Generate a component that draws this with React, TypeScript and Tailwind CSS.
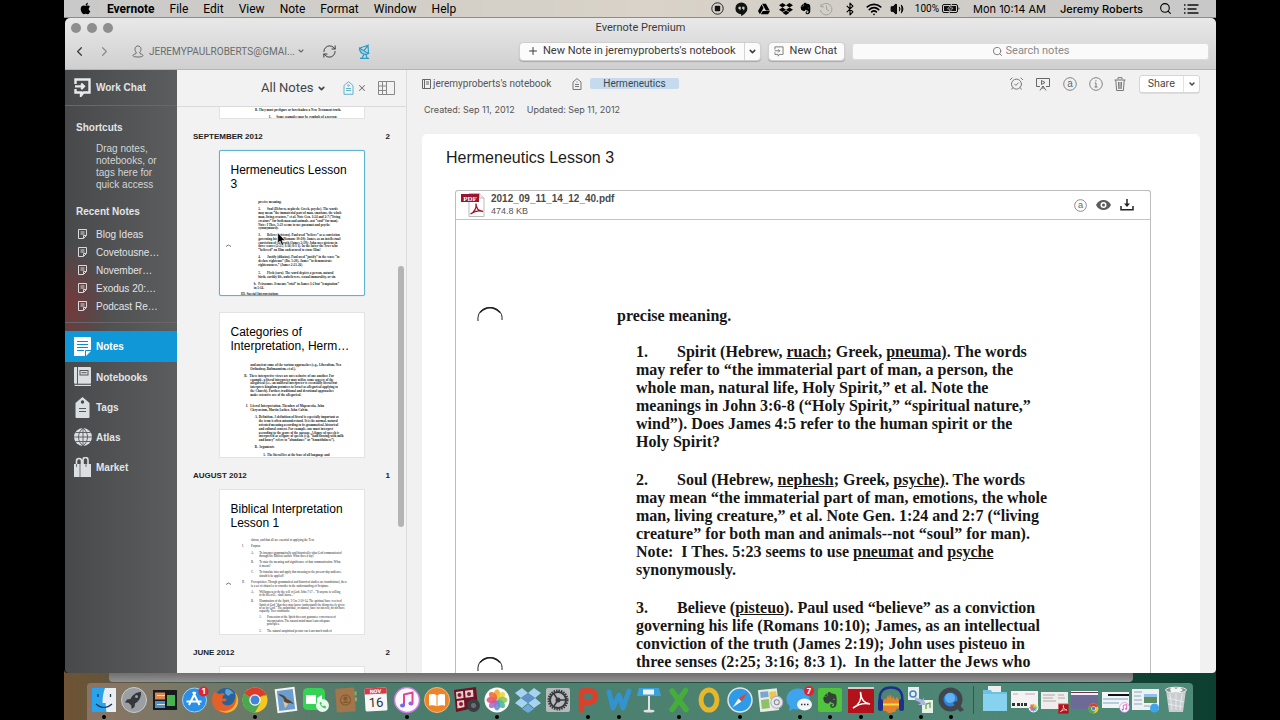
import React from "react";
import {
  AlarmClockCheck,
  Bluetooth,
  ChevronDown,
  ChevronLeft,
  ChevronRight,
  Plus,
  RefreshCw,
  Search,
  Volume2,
  Wifi,
  X,
} from "lucide-react";
import { FaApple, FaDropbox, FaEvernote, FaGoogleDrive } from "react-icons/fa";

/* ---------- menu bar ---------- */

const menus = ["File", "Edit", "View", "Note", "Format", "Window", "Help"];

function MenuBar() {
  return (
    <header className="flex h-[18px] shrink-0 items-center border-b border-[#8c8c8c] bg-linear-to-r from-[#c9c9c9] via-[#d9d3c8] to-[#c8c8c8] pl-[15px] pr-[17px] font-['Inter',sans-serif] text-[12px] leading-4 text-black">
      <FaApple className="h-[13px] w-[13px]" />
      <nav className="ml-[15px] flex gap-[15px] font-['Roboto',sans-serif]">
        <button className="font-bold">Evernote</button>
        {menus.map((m) => (
          <button key={m}>{m}</button>
        ))}
      </nav>
      <div className="ml-auto flex items-center">
        <svg className="h-[13px] w-[13px]" viewBox="0 0 13 13">
          <circle cx="6.5" cy="6.5" r="5.7" fill="none" stroke="#222" />
          <rect x="3.8" y="3.8" width="5.4" height="5.4" rx="1" fill="#111" />
        </svg>
        <svg className="ml-[11px] h-[14px] w-[13px]" viewBox="0 0 13 14">
          <path d="M6.5 .5a5.9 5.9 0 0 0-.4 11.8V14c3-1.400 6.300-4.200 6.300-7.600A5.900 5.900 0 0 0 6.500 .5z" fill="#111" />
          <path d="M3.500 4.700h2.300v2.500L4.600 8.500V7H3.500zM7.200 4.700h2.300v2.500L8.300 8.500V7H7.200z" fill="#ccc" />
        </svg>
        <FaGoogleDrive className="ml-[10px] h-[12px] w-[12px]" />
        <FaDropbox className="ml-[9px] h-[14px] w-[14px]" />
        <FaEvernote className="ml-[6px] h-[13px] w-[13px]" />
        <svg className="ml-[7px] h-[14px] w-[14px]" viewBox="0 0 14 14" fill="none" stroke="#a3a3a3">
          <path d="M2 4.500a5.800 5.800 0 1 1-.6 3.500M2 1.800v3h3M7.500 3.500v4l2.500 1.200" />
        </svg>
        <Bluetooth className="ml-[10px] h-[14px] w-[14px]" strokeWidth={2} />
        <Wifi className="ml-[9px] h-[16px] w-[16px]" strokeWidth={2.600} />
        <Volume2 className="ml-[8px] h-[14px] w-[14px]" fill="#111" strokeWidth={1.800} />
        <span className="ml-[11px] font-['Roboto',sans-serif] text-[10px]">100%</span>
        <svg className="ml-[3px] h-[9px] w-[18px]" viewBox="0 0 18 9">
          <rect x=".5" y=".5" width="15" height="8" rx="1.500" fill="none" stroke="#111" />
          <rect x="2" y="2" width="12" height="5" fill="#111" />
          <path d="M9.500 0 5.500 5h2.500L7 9l4-5H8.500z" fill="#111" stroke="#ccc" strokeWidth=".7" />
          <path d="M16.500 3v3l1-1.500z" fill="#111" />
        </svg>
        <span className="ml-[13px] text-[11px]">Mon 10:14 AM</span>
        <span className="ml-[14px] text-[11px] font-medium">Jeremy Roberts</span>
        <Search className="ml-[16px] h-[13px] w-[13px]" />
        <svg className="ml-[12px] h-[10px] w-[15px]" viewBox="0 0 15 10" stroke="#111" strokeWidth="1.500">
          <path d="M0 1h1.500M0 5h1.500M0 9h1.500M3.500 1h11M3.500 5h9M3.500 9h11" />
        </svg>
      </div>
    </header>
  );
}

/* ---------- window title and toolbar ---------- */

function ChatGlyph({ className, thin }: { className: string; thin?: boolean }) {
  return (
    <svg className={className} viewBox="0 0 17 19" fill="none" stroke="currentColor">
      <path d="M1.500 6V1.500h14v13H9.500L7 17.500v-3H1.500V11" strokeWidth={thin ? 1.600 : 2.400} />
      <path d="M1 8.300h8.500M7.200 5.500 10 8.300l-2.800 2.800" strokeWidth={thin ? 1.600 : 2.200} />
    </svg>
  );
}

const barButton =
  "flex h-[19px] shrink-0 items-center rounded-[4px] border border-[#cfcfcf] bg-[#fbfbfb] shadow-[0_1px_1px_rgba(0,0,0,0.2)]";

function TitleBar() {
  return (
    <div className="flex h-[52px] shrink-0 flex-col rounded-t-[5px] border-b border-[#b5b5b5] bg-linear-to-b from-[#e9e9e9] to-[#cfcfcf] font-['Roboto',sans-serif] text-[#3c3c3c]">
      <div className="grid h-[20px] grid-cols-[1fr_auto_1fr] items-center">
        <div className="flex gap-[6px] pl-[6px]">
          <span className="h-[10px] w-[10px] rounded-full bg-[#8e8e8e]" />
          <span className="h-[10px] w-[10px] rounded-full bg-[#8e8e8e]" />
          <span className="h-[10px] w-[10px] rounded-full bg-[#8e8e8e]" />
        </div>
        <h1 className="text-[11px] leading-4">Evernote Premium</h1>
      </div>
      <div className="flex h-[26px] items-center pr-[7px]">
        <div className="flex w-[454px] shrink-0 items-center pl-[7px]">
          <button aria-label="Back"><ChevronLeft className="h-[15px] w-[15px]" strokeWidth={2} /></button>
          <button aria-label="Forward" className="ml-[10px] text-[#8d8d8d]"><ChevronRight className="h-[15px] w-[15px]" strokeWidth={2} /></button>
          <button className="ml-[20px] flex w-[162px] items-center text-[10px] text-[#6b6b6b]">
            <svg className="h-[13px] w-[12px] shrink-0" viewBox="0 0 12 13" fill="none" stroke="currentColor">
              <path d="M4.500 8C1.800 4.500 3 1 6 1s4.200 3.500 1.500 7c0 1 3.500 1 3.500 2.500 0 1.200-2.500 1.500-5 1.500s-5-.3-5-1.500C1 9 4.500 9 4.500 8z" />
            </svg>
            <span className="ml-[5px]">JEREMYPAULROBERTS@GMAI...</span>
            <ChevronDown className="ml-[2px] h-[8px] w-[8px] shrink-0" strokeWidth={3.500} />
          </button>
          <button aria-label="Sync" className="ml-[28px]"><RefreshCw className="h-[15px] w-[15px]" strokeWidth={1.600} /></button>
          <button aria-label="Announcements" className="ml-[20px]">
            <svg className="h-[15px] w-[14px]" viewBox="0 0 14 15" fill="none" stroke="#2b9bc7" strokeWidth="1.200">
              <path d="M2.500 4C2.500 9 7 12 11.500 9.500z" fill="#9fd2e6" />
              <path d="M7 6.700 11 1.300 11.500 9.500M3 4l8-2.700M7 10.500 5 14M9 10.700l1 3.300M3 14.300h9" />
            </svg>
          </button>
        </div>
        <div className={barButton}>
          <button className="flex h-full items-center pl-[7px] pr-[8px] text-[11px]">
            <Plus className="h-[12px] w-[12px]" strokeWidth={2} />
            <span className="ml-[4px]">New Note in jeremyproberts's notebook</span>
          </button>
          <button aria-label="New note options" className="flex h-full w-[16px] items-center justify-center border-l border-[#d4d4d4]">
            <ChevronDown className="h-[9px] w-[9px]" strokeWidth={4} />
          </button>
        </div>
        <button className={`${barButton} ml-[7px] pl-[5px] pr-[7px] text-[11px]`}>
          <ChatGlyph className="h-[11px] w-[10px] text-[#777]" thin />
          <span className="ml-[6px]">New Chat</span>
        </button>
        <label className="ml-[7px] flex h-[17px] min-w-0 flex-1 items-center justify-center rounded-[3px] border border-[#dcdcdc] bg-[#fafafa]">
          <Search className="h-[11px] w-[11px] text-[#777]" />
          <input
            aria-label="Search notes"
            placeholder="Search notes"
            className="ml-[3px] w-[64px] bg-transparent text-[11px] leading-4 outline-none placeholder:text-[#8a8a8a]"
          />
        </label>
      </div>
    </div>
  );
}

/* ---------- sidebar ---------- */

const recent = ["Blog Ideas", "Covetousne…", "November…", "Exodus 20:…", "Podcast Re…"];

function NotesIcon() {
  return (
    <svg className="h-[20px] w-[17px]" viewBox="0 0 17 20">
      <path d="M0 0h17v14l-5 5H0z" fill="#fff" />
      <path d="M3 4.500h11M3 7.500h11M3 10.500h11M3 13.500h7" stroke="#1089cf" />
      <path d="M11.500 19v-5.500H17" fill="none" stroke="#1089cf" />
    </svg>
  );
}
function NotebooksIcon() {
  return (
    <svg className="h-[20px] w-[17px]" viewBox="0 0 17 20">
      <rect x="0" y="0" width="17" height="17" rx="1" fill="#dcdfe2" />
      <path d="M0 17.500h17v1.500H1z" fill="#dcdfe2" />
      <path d="M3.500 0v17M0 17.200h17" stroke="#55585b" />
      <rect x="6" y="3.500" width="8" height="4.500" fill="none" stroke="#55585b" />
      <path d="M7.500 5.700h5" stroke="#55585b" />
    </svg>
  );
}
function TagsIcon() {
  return (
    <svg className="h-[21px] w-[17px]" viewBox="0 0 17 21">
      <path d="M8.500 0 15.500 6v14a1 1 0 0 1-1 1h-12a1 1 0 0 1-1-1V6z" fill="#dcdfe2" />
      <circle cx="8.500" cy="5" r="1.700" fill="#46494c" />
      <path d="M5 11.500h7M5 14.500h7" stroke="#55585b" />
    </svg>
  );
}
function AtlasIcon() {
  return (
    <svg className="h-[18px] w-[18px] shrink-0" viewBox="0 0 18 18">
      <circle cx="9" cy="9" r="9" fill="#dcdfe2" />
      <path d="M9 0v18M0 9h18M1.500 4.500h15M1.500 13.500h15M9 0C3 5 3 13 9 18M9 0c6 5 6 13 0 18" fill="none" stroke="#55585b" strokeWidth=".9" />
    </svg>
  );
}
function MarketIcon() {
  return (
    <svg className="h-[20px] w-[17px]" viewBox="0 0 17 20">
      <path d="M0 7h17v13H0z" fill="#dcdfe2" />
      <path d="M2.500 9V4a2.500 2.500 0 0 1 5 0v5M9 8V3a2.500 2.500 0 0 1 5 0v6" fill="none" stroke="#dcdfe2" strokeWidth="1.600" />
      <path d="M6 7v13M2.500 7v3M12 7v3" stroke="#55585b" strokeWidth=".8" />
    </svg>
  );
}

const places = [
  { name: "Notebooks", Icon: NotebooksIcon },
  { name: "Tags", Icon: TagsIcon },
  { name: "Atlas", Icon: AtlasIcon },
  { name: "Market", Icon: MarketIcon },
];

function Sidebar() {
  return (
    <aside className="flex w-[112px] shrink-0 flex-col bg-[radial-gradient(ellipse_45px_60px_at_0px_235px,#78393b_0%,transparent_100%),linear-gradient(to_right,#47494b,#5c5d5e)] text-[10px] text-[#e2e4e6]">
      <button className="flex h-[36px] shrink-0 items-center border-b border-[#66686a] pl-[9px] font-bold">
        <ChatGlyph className="h-[19px] w-[17px] text-[#e8eaec]" />
        <span className="ml-[5px]">Work Chat</span>
      </button>
      <h2 className="mt-[15px] pl-[11px] font-bold leading-[14px]">Shortcuts</h2>
      <p className="mt-[8px] pl-[31px] pr-[10px] leading-3 text-[#d3d5d7]">Drag notes, notebooks, or tags here for quick access</p>
      <h2 className="mt-[14px] pl-[11px] font-bold leading-[14px]">Recent Notes</h2>
      <ul className="mt-[6px]">
        {recent.map((r) => (
          <li key={r}>
            <button className="flex h-[18px] w-full items-center pl-[13px]">
              <svg className="h-[10px] w-[9px]" viewBox="0 0 9 10" fill="none" stroke="#d8dadc">
                <path d="M.5 .5h8v6l-3 3h-5zM2.500 3h4M2.500 5h4M5.500 9V6.500H8" />
              </svg>
              <span className="ml-[9px] whitespace-nowrap">{r}</span>
            </button>
          </li>
        ))}
      </ul>
      <div className="mt-[7px] border-t border-[#6a6668]" />
      <nav className="mt-[8px] font-bold">
        <button className="flex h-[31px] w-full items-center bg-[#0f97d8] pl-[9px] text-white">
          <NotesIcon />
          <span className="ml-[5px]">Notes</span>
        </button>
        {places.map(({ name, Icon }) => (
          <button key={name} className="flex h-[30px] w-full items-center pl-[9px]">
            <span className="flex w-[17px] justify-center"><Icon /></span>
            <span className="ml-[5px]">{name}</span>
          </button>
        ))}
      </nav>
    </aside>
  );
}

/* ---------- note list ---------- */

type Line = [number, number, string];

const lessonThree: Line[] = [
  [153, 47, "precise meaning."],
  [153, 77, "2."], [188, 77, "Soul (Hebrew, nephesh; Greek, psyche). The words"],
  [153, 93, "may mean “the immaterial part of man, emotions, the whole"],
  [153, 108, "man, living creature,” et al. Note Gen. 1:24 and 2:7 (“living"],
  [153, 123, "creature” for both man and animals--not “soul” for man)."],
  [153, 138, "Note: I Thes. 5:23 seems to use pneumat and psyche"],
  [153, 153, "synonymously."],
  [153, 180, "3."], [188, 180, "Believe (pisteuo). Paul used “believe” as a conviction"],
  [153, 195, "governing his life (Romans 10:10); James, as an intellectual"],
  [153, 210, "conviction of the truth (James 2:19); John uses pisteuo in"],
  [153, 225, "three senses (2:25; 3:16; 8:3 1). In the latter the Jews who"],
  [153, 240, "“believed” on Him endeavored to stone Him!"],
  [153, 269, "4."], [188, 269, "Justify (dikaioo). Paul used “justify” in the sense “to"],
  [153, 284, "declare righteous” (Ro. 5:20), James “to demonstrate"],
  [153, 299, "righteousness,” (James 2:21-26)"],
  [153, 333, "5."], [188, 333, "Flesh (sarx). The word depicts a person, natural"],
  [153, 348, "birth, earthly life, unbelievers, sexual immorality, or sin"],
  [135, 377, "b."], [153, 377, "Peirasmos. It means “trial” in James 1:2 but “temptation”"],
  [135, 392, "in 1:14."],
  [84, 416, "III. Special Interpretations"],
];

const categories: Line[] = [
  [121, 51, "and ancient some of the various approaches (e.g., Liberalism, Neo"],
  [121, 66, "Orthodoxy, Bultmannism, et al.)."],
  [97, 95, "B."], [117, 95, "These interpretive views are not exclusive of one another. For"],
  [121, 110, "example, a literal interpreter may utilize some aspects of the"],
  [121, 125, "allegorical (i.e., an unliteral interpreter is essentially literal but"],
  [121, 140, "interprets kingdom promises to Israel as allegorical applying to"],
  [121, 156, "the Church). Further, traditional and devotional approaches"],
  [121, 171, "make extensive use of the allegorical."],
  [104, 215, "I."], [121, 215, "Literal Interpretation, Theodore of Mopsuestia, John"],
  [121, 230, "Chrysostom, Martin Luther, John Calvin."],
  [139, 260, "A."], [155, 260, "Definition. A definition of literal is especially important as"],
  [155, 275, "the term is often misunderstood. It is the normal, natural"],
  [155, 291, "oriented meaning according to its grammatical, historical"],
  [155, 306, "and cultural context. For example, one must interpret"],
  [155, 322, "according to the genre of the passage. A figure of speech is"],
  [155, 337, "interpreted as a figure of speech (e.g. “land flowing with milk"],
  [155, 353, "and honey” refers to “abundance” or “bountifulness”)."],
  [139, 381, "B."], [155, 381, "Arguments"],
  [173, 412, "1."], [188, 412, "The literal lies at the base of all language and"],
];

const lessonOne: Line[] = [
  [124, 45, "shown, and that all are essential to applying the Text."],
  [88, 69, "I."], [124, 69, "Purpose"],
  [124, 95, "A."], [157, 95, "To interpret grammatically and historically what God communicated"],
  [157, 109, "through the Biblical author. What does it say?"],
  [124, 133, "B."], [157, 133, "To state the meaning and significance of that communication. What"],
  [157, 148, "it means?"],
  [124, 173, "C."], [157, 173, "To translate into and apply that meaning to the present-day audience."],
  [157, 187, "should it be applied?"],
  [88, 213, "II."], [124, 213, "Prerequisites: Though grammatical and historical studies are foundational, there"],
  [124, 227, "is a set of obstacles to consider in the understanding of Scripture."],
  [124, 251, "A."], [157, 251, "Willingness to do the will of God. John 7:17 – “If anyone is willing"],
  [157, 265, "to do his will... shall know...”"],
  [124, 289, "B."], [157, 289, "Illumination of the Spirit, I Cor. 2:10-14. The spiritual have received"],
  [157, 303, "Spirit of God “that they may know (understand) the things freely given"],
  [157, 316, "to us by God.” The unspiritual, or natural, have no interest, do not have"],
  [157, 329, "capacity. Two conditions:"],
  [157, 353, "1."], [188, 353, "Possession of the Spirit does not guarantee correctness of"],
  [188, 367, "interpretation. The natural mind must learn adequate"],
  [188, 381, "principles."],
  [157, 407, "2."], [188, 407, "The natural unspiritual person can learn much truth of"],
];

function Preview({ lines, size, weight, arcY }: { lines: Line[]; size: number; weight: number; arcY?: number }) {
  return (
    <svg className="block w-full" viewBox="0 0 576 416" aria-hidden="true">
      <g fontFamily="Liberation Serif, serif" fontSize={size} fontWeight={weight} fill="#1b1b1b">
        {lines.map(([x, y, t]) => (
          <text key={`${x}-${y}`} x={x} y={y}>{t}</text>
        ))}
      </g>
      {arcY !== undefined && <path d={`M24 ${arcY}q10-12 20 0`} fill="none" stroke="#777" strokeWidth="4" />}
    </svg>
  );
}

function Card({ title, selected, children }: { title: React.ReactNode; selected?: boolean; children: React.ReactNode }) {
  return (
    <article
      className={`relative mx-auto h-[146px] w-[146px] shrink-0 border bg-white ${selected ? "rounded-[2px] border-[#5fb2d6] shadow-[0_0_1px_#5fb2d6]" : "border-[#e3e3e3]"}`}
    >
      <h3 className="h-[40px] pl-[11px] pt-[12px] text-[12px] leading-[14px] text-black">{title}</h3>
      {children}
    </article>
  );
}

function Month({ name, count }: { name: string; count: number }) {
  return (
    <div className="mb-[4px] mt-[9px] flex h-[18px] shrink-0 items-center justify-between pl-[16px] pr-[16px] text-[8px] font-bold text-[#222]">
      <h2>{name}</h2>
      <span>{count}</span>
    </div>
  );
}

function NoteList() {
  return (
    <section className="relative flex w-[229px] shrink-0 flex-col overflow-hidden bg-[#f2f2f2]">
      <div className="flex h-[37px] shrink-0 items-center border-b border-[#dadada] pl-[84px] text-[#444]">
        <button className="flex items-center whitespace-nowrap font-['Roboto',sans-serif] text-[13px]">
          All Notes
          <ChevronDown className="ml-[3px] h-[9px] w-[9px]" strokeWidth={4.500} />
        </button>
        <button aria-label="Tag filter" className="ml-auto">
          <svg className="h-[14px] w-[11px]" viewBox="0 0 11 14" fill="none" stroke="#62b3cc">
            <path d="M5.500 .7 10 4.500v8.800H1V4.500zM3 7.500h5M3 9.500h5" />
            <circle cx="5.500" cy="4.500" r=".8" />
          </svg>
        </button>
        <button aria-label="Clear filter" className="ml-[3px] text-[#777]"><X className="h-[10px] w-[10px]" strokeWidth={2.500} /></button>
        <button aria-label="View options" className="ml-[11px] mr-[11px]">
          <svg className="h-[14px] w-[17px]" viewBox="0 0 17 14" fill="none" stroke="#888">
            <path d="M.5 .5h16v13H.5zM8.500 .5v13M4.500 .5v13M.5 5h8M.5 9.500h8" />
          </svg>
        </button>
      </div>
      <div className="flex min-h-0 flex-1 flex-col overflow-hidden">
        <div className="mx-auto h-[12px] w-[146px] shrink-0 border border-t-0 border-[#e3e3e3] bg-white">
          <svg className="block w-full" viewBox="0 0 576 44" aria-hidden="true">
            <g fontFamily="Liberation Serif, serif" fontSize="13" fontWeight="700" fill="#1b1b1b">
              <text x="140" y="15">B. They must prefigure or foreshadow a New Testament truth.</text>
              <text x="195" y="43">1.</text>
              <text x="225" y="43">Some examples may be symbols of a person</text>
            </g>
          </svg>
        </div>
        <Month name="SEPTEMBER 2012" count={2} />
        <div className="flex flex-col gap-[16px]">
          <Card title={<>Hermeneutics Lesson<br />3</>} selected>
            <Preview lines={lessonThree} size={13} weight={700} arcY={222} />
            <svg className="absolute left-[57px] top-[81px] h-[14px] w-[9px]" viewBox="0 0 9 14">
              <path d="M.7 .8v10.500l2.400-2.200 1.700 4.200 1.800-.8-1.700-4h3.300z" fill="#000" stroke="#fff" strokeWidth=".6" />
            </svg>
          </Card>
          <Card title={<>Categories of<br />Interpretation, Herm…</>}>
            <Preview lines={categories} size={13} weight={700} />
          </Card>
        </div>
        <Month name="AUGUST 2012" count={1} />
        <Card title={<>Biblical Interpretation<br />Lesson 1</>}>
          <Preview lines={lessonOne} size={12} weight={400} arcY={218} />
        </Card>
        <Month name="JUNE 2012" count={2} />
        <div className="mx-auto h-[146px] w-[146px] shrink-0 border border-[#e3e3e3] bg-white" />
      </div>
      <span className="absolute right-[2px] top-[196px] h-[261px] w-[6px] rounded-full bg-[#b4b4b4]" />
    </section>
  );
}

/* ---------- note ---------- */

function AtIcon({ className }: { className: string }) {
  return (
    <svg className={className} viewBox="0 0 14 14">
      <circle cx="7" cy="7" r="6.300" fill="none" stroke="#777" strokeWidth=".9" />
      <text x="7" y="10" textAnchor="middle" fontFamily="Liberation Sans, sans-serif" fontSize="10" fill="#666">a</text>
    </svg>
  );
}

function NoteTools() {
  return (
    <div className="ml-auto flex items-center text-[#777]">
      <button aria-label="Reminder"><AlarmClockCheck className="h-[15px] w-[15px]" strokeWidth={1.600} /></button>
      <button aria-label="Present" className="ml-[12px]">
        <svg className="h-[14px] w-[14px]" viewBox="0 0 14 14" fill="none" stroke="#666">
          <path d="M4 9.500H.5v-8h13v8H10M5.500 3.500v4l3.500-2zM7 9l-3 4.500M7 9l3 4.500M7 9v3" />
        </svg>
      </button>
      <button aria-label="Annotate" className="ml-[13px]"><AtIcon className="h-[14px] w-[14px]" /></button>
      <button aria-label="Note info" className="ml-[12px]">
        <svg className="h-[14px] w-[14px]" viewBox="0 0 14 14" fill="none" stroke="#777">
          <circle cx="7" cy="7" r="6.300" strokeWidth=".9" />
          <path d="M5.800 6H7v4M5.500 10h3M6.300 3.800h1.200" />
        </svg>
      </button>
      <button aria-label="Delete note" className="ml-[11px]">
        <svg className="h-[14px] w-[12px]" viewBox="0 0 12 14" fill="none" stroke="#777">
          <path d="M.5 3h11M4 2.500V.7h4v1.800M1.800 3l.8 10.500h6.800L10.200 3M4.500 5l.3 7M6 5v7M7.500 5l-.3 7" />
        </svg>
      </button>
      <div className="ml-[13px] flex h-[18px] items-center rounded-[3px] border border-[#d6d6d6] bg-white font-['Inter',sans-serif] text-[10px] text-[#444] shadow-[0_1px_0_rgba(0,0,0,0.08)]">
        <button className="h-full px-[8px]">Share</button>
        <button aria-label="Share options" className="flex h-full w-[16px] items-center justify-center border-l border-[#e2e2e2]">
          <ChevronDown className="h-[8px] w-[8px]" strokeWidth={4.500} />
        </button>
      </div>
    </div>
  );
}

function Hole() {
  return (
    <svg className="h-[16px] w-[26px]" viewBox="0 0 26 16" fill="none" stroke="#222">
      <path d="M1 15C0 6 6 1.500 13 1.500S26 6 25 14" strokeWidth="1" />
      <path d="M3 6.500C9 0 17 0 23 6.500" strokeWidth="1.500" />
    </svg>
  );
}

function Item({ n, first, lines }: { n: string; first: React.ReactNode; lines: React.ReactNode[] }) {
  return (
    <div>
      <p className="flex">
        <span className="w-[41px]">{n}</span>
        <span>{first}</span>
      </p>
      {lines.map((l, i) => (
        <p key={i}>{l}</p>
      ))}
    </div>
  );
}

function Note() {
  return (
    <main className="flex min-w-0 flex-1 flex-col overflow-hidden border-l border-[#dcdcdc] bg-[#f1f1f1] pl-[15px]">
      <div className="flex h-[27px] shrink-0 items-center pr-[16px] font-['Roboto',sans-serif] text-[10px] text-[#555]">
        <button className="flex items-center whitespace-nowrap">
          <svg className="mr-[2px] h-[10px] w-[9px]" viewBox="0 0 9 10" fill="none" stroke="#666">
            <path d="M.5 .5h8v9h-8zM2.500 .5v9M4 3h3M4 5h3" />
          </svg>
          jeremyproberts's notebook
        </button>
        <svg className="ml-[21px] h-[12px] w-[10px]" viewBox="0 0 10 12" fill="none" stroke="#777">
          <path d="M5 .6 9 4v7.500H1V4zM3 6.500h4M3 8.500h4M4.500 4h1" />
        </svg>
        <a href="#hermeneutics" className="ml-[8px] flex h-[11px] items-center rounded-[2px] bg-[#c5dbed] px-[13px] text-[#3c4650]">Hermeneutics</a>
        <NoteTools />
      </div>
      <div className="flex h-[37px] shrink-0 gap-[12px] pl-[2px] pt-[5px] font-['Inter',sans-serif] text-[9px] leading-[15px] text-[#555]">
        <span>Created: Sep 11, 2012</span>
        <span>Updated: Sep 11, 2012</span>
      </div>
      <article className="mr-[16px] flex min-h-0 flex-1 flex-col rounded-t-[5px] bg-white pl-[24px]">
        <h2 className="mt-[14px] text-[16px] leading-5 text-[#1c1c1c]">Hermeneutics Lesson 3</h2>
        <div className="ml-[9px] mr-[49px] mt-[22px] flex min-h-0 flex-1 flex-col rounded-t-[3px] border border-b-0 border-[#bdbdbd]">
          <div className="flex h-[29px] shrink-0 items-center border-b border-[#c4c4c4] pl-[5px] pr-[16px] text-[#555]">
            <svg className="h-[24px] w-[24px]" viewBox="0 0 24 24">
              <path d="M8 .5h10.500L23 5v18.500H8z" fill="#fdfdfd" stroke="#bbb" />
              <path d="M18.500 .5V5H23" fill="#eee" stroke="#bbb" />
              <rect x="0" y="1" width="18" height="8" fill="#9b1431" />
              <text x="9" y="7.500" textAnchor="middle" fontFamily="Liberation Serif, serif" fontWeight="700" fontSize="7" fill="#fff">PDF</text>
              <path d="M9.500 21c4-2 6-6 5.500-10.500C15 16 18 18 22 18.500c-4-1.500-9 0-12.500 2.500z" fill="none" stroke="#a31830" strokeWidth="1.300" />
            </svg>
            <div className="ml-[6px]">
              <p className="text-[10px] font-bold leading-3 text-[#4a4a4a]">2012_09_11_14_12_40.pdf</p>
              <p className="text-[9px] leading-3">474.8 KB</p>
            </div>
            <button aria-label="Annotate attachment" className="ml-auto"><AtIcon className="h-[13px] w-[13px]" /></button>
            <button aria-label="Quick look" className="ml-[9px]">
              <svg className="h-[12px] w-[15px]" viewBox="0 0 15 12">
                <path d="M0 6C3-.8 12-.8 15 6c-3 6.800-12 6.800-15 0z" fill="#5c5c5c" />
                <circle cx="7.500" cy="6" r="3" fill="#fff" />
                <circle cx="7.500" cy="6" r="1.500" fill="#5c5c5c" />
              </svg>
            </button>
            <button aria-label="Save attachment" className="ml-[9px]">
              <svg className="h-[12px] w-[14px]" viewBox="0 0 14 12" fill="none" stroke="#222" strokeWidth="1.500">
                <path d="M1 7v3.800h12V7M7 0v6" />
                <path d="M4 4.500 7 8l3-3.500z" fill="#222" stroke="none" />
              </svg>
            </button>
          </div>
          <div className="flex min-h-0 flex-1 overflow-hidden">
            <div className="flex w-[161px] shrink-0 flex-col gap-[334px] pl-[21px] pt-[86px]">
              <Hole />
              <Hole />
            </div>
            <div className="shrink-0 whitespace-nowrap pt-[87px] font-['Liberation_Serif',serif] text-[16px] font-bold leading-[18px] text-[#161616]">
              <p>precise meaning.</p>
              <div className="flex flex-col gap-[20px] pl-[19px] pt-[18px]">
                <Item
                  n="1."
                  first={<>Spirit (Hebrew, <u>ruach</u>; Greek, <u>pneuma)</u>. The words</>}
                  lines={[
                    "may refer to “the immaterial part of man, a person, the",
                    "whole man, natural life, Holy Spirit,” et al. Note the",
                    "meanings in John 3:6-8 (“Holy Spirit,” “spiritual nature,”",
                    "wind”). Does James 4:5 refer to the human spirit or the",
                    "Holy Spirit?",
                  ]}
                />
                <Item
                  n="2."
                  first={<>Soul (Hebrew, <u>nephesh</u>; Greek, <u>psyche)</u>. The words</>}
                  lines={[
                    "may mean “the immaterial part of man, emotions, the whole",
                    "man, living creature,” et al. Note Gen. 1:24 and 2:7 (“living",
                    "creature” for both man and animals--not “soul” for man).",
                    <>Note:&nbsp; I Thes. 5:23 seems to use <u>pneumat</u> and <u>psyche</u></>,
                    "synonymously.",
                  ]}
                />
                <Item
                  n="3."
                  first={<>Believe (<u>pisteuo</u>). Paul used “believe” as a conviction</>}
                  lines={[
                    "governing his life (Romans 10:10); James, as an intellectual",
                    "conviction of the truth (James 2:19); John uses pisteuo in",
                    <>three senses (2:25; 3:16; 8:3 1).&nbsp; In the latter the Jews who</>,
                  ]}
                />
              </div>
            </div>
          </div>
        </div>
      </article>
    </main>
  );
}

/* ---------- dock ---------- */

const letter = { fontFamily: "Inter, sans-serif", fontWeight: 800, textAnchor: "middle" as const };

function Chrome() {
  return (
    <g>
      <circle cx="14" cy="14" r="12.500" fill="#f4c820" />
      <path d="M14 14 3.200 7.700A12.500 12.500 0 0 1 24.800 7.700z" fill="#dd3b2f" />
      <path d="M14 14 3.200 7.700A12.500 12.500 0 0 0 14 26.500l5-9z" fill="#4aa853" />
      <path d="M14 8.500h10.800" stroke="#dd3b2f" strokeWidth="2" />
      <circle cx="14" cy="14" r="5.700" fill="#fff" />
      <circle cx="14" cy="14" r="4.500" fill="#4384d8" />
    </g>
  );
}
function Acrobat() {
  return (
    <g>
      <rect x="1" y="1" width="26" height="26" fill="#b3121b" />
      <path d="M1 1h26v2H1z" fill="#e8c8c8" />
      <path d="M6 22c6-3 9-9 7.500-16 .5 8 4 11.500 9.500 12-6-1.500-12 .5-17 4z" fill="none" stroke="#fff" strokeWidth="1.600" />
    </g>
  );
}
function ITunes() {
  return (
    <g>
      <circle cx="14" cy="14" r="12.500" fill="#fbf7fc" stroke="#c77be0" strokeWidth="1.500" />
      <path d="M11 19V8.500l8.500-2V17" fill="none" stroke="#e0468f" strokeWidth="2" />
      <ellipse cx="9.500" cy="19.500" rx="2.500" ry="2" fill="#6f6ce8" />
      <ellipse cx="18" cy="17.500" rx="2.500" ry="2" fill="#a55ae0" />
    </g>
  );
}
const petals = [
  ["#f4a62a", 0], ["#e8d53a", 45], ["#8cc84b", 90], ["#4cb6a0", 135],
  ["#5b8fd8", 180], ["#a46cc8", 225], ["#e0507e", 270], ["#ee6a3a", 315],
] as const;
function Photos() {
  return (
    <g>
      <circle cx="14" cy="14" r="12.500" fill="#fafafa" />
      {petals.map(([c, a]) => (
        <ellipse key={a} cx="14" cy="8.500" rx="3.200" ry="5" fill={c} opacity=".88" transform={`rotate(${a} 14 14)`} />
      ))}
    </g>
  );
}

const apps: { name: string; on?: boolean; art: React.ReactNode }[] = [
  { name: "Finder", on: true, art: <g><rect x="2" y="2" width="24" height="24" fill="#2aa3ee" /><path d="M15 2h11v24H16.500c-.5-3-.8-5.500-.8-9H12.500C12.500 11 13.500 6 15 2z" fill="#e9eef3" /><path d="M8 8v3M20.500 8v3M6 18c5 4.500 11 4.500 16 0" stroke="#143a5c" strokeWidth="1.300" fill="none" /></g> },
  { name: "Launchpad", art: <g><circle cx="14" cy="14" r="12.500" fill="#9b9fa3" stroke="#c9cbcd" /><path d="M21 6c-6 0-9 4-10.500 7l-3.500.5-2 3 3.500.2 2.800 2.800.2 3.500 3-2 .5-3.500C18 16 21.500 12 21 6z" fill="#33363a" /><circle cx="16.500" cy="10.500" r="1.500" fill="#9b9fa3" /></g> },
  { name: "Mission Control", art: <g><rect x="2" y="4" width="24" height="20" fill="#171a1c" /><path d="M4 6.500h10v7H4z" fill="#d98850" /><path d="M4 15h10v7H4z" fill="#4b8fd0" /><path d="M16 9h8v11h-8z" fill="#46b44c" /><path d="M6 9h8v1H6zM6 18h8v1H6z" fill="#e9e2d2" /></g> },
  { name: "App Store", art: <g><circle cx="13.500" cy="14" r="12" fill="#2a8fe6" stroke="#9fd0f5" /><path d="M14.500 6 8 19M12 6l6.500 13M5.500 15.500h15" stroke="#fff" strokeWidth="2" /><circle cx="22.500" cy="5.500" r="5" fill="#df2431" /><text x="22.500" y="8.300" fontSize="8" fill="#fff" {...letter}>1</text></g> },
  { name: "Firefox", art: <g><circle cx="15" cy="13" r="11" fill="#27629c" /><path d="M15 3c4 0 6 2 8 5-3-1-4 0-5 2-3-1-5-3-3-7z" fill="#5ea4d6" /><path d="M3 6c-1 2-2 5-2 8 0 8 6 13 13 13s13-5 13-13c0-3-1-6-3-8 1 4 0 8-2 11-2 2-5 3-8 2-2-1-3-2-3-4 2 1 4 0 5-1-1-1-2-2-4-1-1-2 0-4 2-5-1-1-4-1-5 0C6 7 4 7 3 6z" fill="#e2602a" /><path d="M24 6c3 7 1 15-6 18-3 1.500-7 1.500-10 0 6 5 17 3 19-7 .8-4-.5-8-3-11z" fill="#f4b32f" /></g> },
  { name: "Chrome", on: true, art: <Chrome /> },
  { name: "Mail", art: <g transform="rotate(-7 14 14)"><rect x="4" y="2" width="20" height="24" fill="#f4f4f4" /><rect x="6" y="4" width="16" height="20" fill="#6b9dce" /><path d="M7 7c4 1 7 3 8 6 2 1 5 3 6 6-3-2-5-2-7-1-3-2-1-5-3-7S8 9 7 7z" fill="#5b4531" /><path d="M11 15l5 3-4 4z" fill="#d8c6a0" /></g> },
  { name: "FaceTime", art: <g><rect x="1" y="2" width="22" height="22" rx="4.500" fill="#35d255" /><path d="M4 9h10v9H4zM15 12l5-3v9l-5-3z" fill="#fff" /><circle cx="20.500" cy="19.500" r="6.500" fill="#e9f8ec" /><path d="M17.500 17c1 3 3 5 6 5.500l.5-2-2-1-1 1-2-2 .7-1-.8-1.800z" fill="#35c655" /></g> },
  { name: "Contacts", art: <g transform="rotate(-4 14 14)"><rect x="4" y="2" width="19" height="24" rx="1" fill="#a2764a" /><path d="M23 6h2v4h-2zM23 12h2v4h-2z" fill="#86b06a" /><circle cx="13.500" cy="14" r="5" fill="none" stroke="#80592f" /><circle cx="13.500" cy="12.500" r="2" fill="#80592f" /><path d="M10 17c1-2.500 6-2.500 7 0z" fill="#80592f" /></g> },
  { name: "Calendar", art: <g transform="rotate(-3 14 14)"><rect x="3" y="2" width="22" height="23" rx="1.500" fill="#f7f7f7" /><path d="M3 2h22v6H3z" fill="#d83a45" /><text x="14" y="7.200" fontSize="5" fill="#fff" {...letter}>NOV</text><text x="14" y="21" fontSize="13" fill="#333" fontFamily="Roboto, sans-serif" textAnchor="middle">16</text></g> },
  { name: "iTunes", on: true, art: <ITunes /> },
  { name: "iBooks", art: <g><circle cx="14" cy="14" r="12.500" fill="#ee8428" stroke="#f5b880" /><path d="M6 8.500c3-1 6-.8 7.500.7v11C11.500 19 9 19 6 19.700zM22 8.500c-3-1-6-.8-7.500.7v11c2-1.200 4.500-1.200 7.500-.5z" fill="#fff" /></g> },
  { name: "Photo Booth", art: <g><path d="m1 4 22-3 2 20-22 5z" fill="#6f1324" /><path d="m3 6 7-1 .5 7-7 1zM12 4.700l8-1 .5 7-8 1zM4 15l7-1 .5 7-7 1.500z" fill="#e6cdd0" /><circle cx="6.500" cy="9" r="2" fill="#8c1a2c" /><circle cx="16" cy="8" r="2" fill="#8c1a2c" /><circle cx="8" cy="18" r="2" fill="#8c1a2c" /><circle cx="20.500" cy="19.500" r="6.500" fill="#3b3d40" /><circle cx="20.500" cy="19.500" r="2.500" fill="#66707a" /></g> },
  { name: "Photos", on: true, art: <Photos /> },
  { name: "Dropbox", art: <g fill="#a8d3f0"><path d="m8 2-7 5 6 5 7-5zM20 2l7 5-6 5-7-5zM1 17l7 5 6-5-7-5zM27 17l-7 5-6-5 7-5z" /><path d="m8 23 6-5 6 5-6 4z" fill="#6fa9da" /><path d="m7 12 7-5 7 5-7 5z" fill="#5d93c8" /></g> },
  { name: "System Preferences", art: <g><rect x="2" y="2" width="24" height="24" rx="2" fill="#b7babc" /><circle cx="14" cy="14" r="9.500" fill="none" stroke="#36393c" strokeWidth="2" strokeDasharray="1.500 1" /><circle cx="14" cy="14" r="8" fill="none" stroke="#36393c" strokeWidth="2" /><circle cx="14" cy="14" r="2.500" fill="#36393c" /><path d="M14 14h7M14 14l-4 6M14 14l-4-6" stroke="#36393c" strokeWidth="1.500" /></g> },
  { name: "PowerPoint", on: true, art: <path d="M7.500 24V5.500c6-1.500 14-1.500 14 4.500s-7 7.500-14 6" fill="none" stroke="#d9412d" strokeWidth="5.500" strokeLinecap="round" strokeLinejoin="round" /> },
  { name: "Word", on: true, art: <path d="M4 6l4 16 6-13 4 13 6-17" fill="none" stroke="#3293cf" strokeWidth="5" strokeLinecap="round" strokeLinejoin="round" /> },
  { name: "Keynote", art: <g><path d="M4 2h20l2 8H2z" fill="#3aa0dc" /><path d="M8 3.500h11v5H8z" fill="#eef4f8" /><path d="M14 10v14" stroke="#dfe3e6" strokeWidth="2" /><ellipse cx="14" cy="25" rx="5.500" ry="1.500" fill="#dfe3e6" /></g> },
  { name: "Excel", on: true, art: <path d="M7 5l14 18.500M20.500 4.500 7 23.500" fill="none" stroke="#45ad3b" strokeWidth="5.500" strokeLinecap="round" /> },
  { name: "Outlook", art: <ellipse cx="14" cy="14" rx="8" ry="10" fill="none" stroke="#e6b62c" strokeWidth="5" /> },
  { name: "Safari", on: true, art: <g><circle cx="14" cy="14" r="12" fill="#2d9be8" stroke="#e3e6e8" strokeWidth="1.500" /><path d="m21.500 6.500-6 9-3-3z" fill="#e8402f" /><path d="m6.500 21.500 6-9 3 3z" fill="#f4f4f4" /></g> },
  { name: "News Reader", art: <g transform="rotate(-6 14 14)"><rect x="3" y="3" width="19" height="22" fill="#e9ebe4" /><path d="M5 5h8v6H5z" fill="#79a7cf" /><path d="M5 13h8v9H5z" fill="#8ec06a" /><path d="M14 6h7v7h-7z" fill="#e9c84c" /><circle cx="20.500" cy="17" r="6" fill="#e4e8ea" stroke="#aab" /><circle cx="20.500" cy="17" r="2.500" fill="none" stroke="#889" /></g> },
  { name: "Messages", on: true, art: <g><ellipse cx="12" cy="13" rx="11.500" ry="10.500" fill="#3fa4ec" /><path d="m4 20-1 5 6-3z" fill="#3fa4ec" /><ellipse cx="18.500" cy="18.500" rx="7.500" ry="6" fill="#f3f6f8" /><path d="M15 18.500h1.500M18 18.500h1.500M21 18.500h1.500" stroke="#333" strokeWidth="1.700" /><circle cx="23" cy="5" r="5" fill="#df2431" /><text x="23" y="7.700" fontSize="7.500" fill="#fff" {...letter}>7</text></g> },
  { name: "Evernote", on: true, art: <g><rect x="2" y="2" width="24" height="24" rx="2" fill="#50c43c" /><FaEvernote x="5" y="5" size="18" color="#35423a" /></g> },
  { name: "Acrobat", on: true, art: <Acrobat /> },
  { name: "Audacity", on: true, art: <g><path d="M3 17C1 4 8 1.500 14 1.500S27 4 25 17" fill="none" stroke="#1b2f8c" strokeWidth="2.500" /><rect x="1" y="13" width="5" height="12" rx="2.500" fill="#1b2f8c" /><rect x="22" y="13" width="5" height="12" rx="2.500" fill="#1b2f8c" /><path d="m6 15 2-3 1 2 2-5 1 3 1-4 2 5 1-3 2 4 2-3 2 3v9l-2-1-2 4-2 0-2 1-1 0-2 0-2-2-2 0-1-1z" fill="#e8812c" /><path d="M6 18.500h16" stroke="#f6df45" strokeWidth="2" /></g> },
  { name: "Media Converter", on: true, art: <g><rect x="1" y="1" width="11" height="13" fill="#e9edf0" /><circle cx="6" cy="8" r="3" fill="none" stroke="#3f86c0" strokeWidth="1.500" /><rect x="15" y="14" width="11" height="13" fill="#e9f0e6" /><path d="M19 23v-5l4-1v5" fill="none" stroke="#5fa552" strokeWidth="1.300" /><path d="m8 11 8 3 0-3 3 8-8 0 3-2-6-3z" fill="#a9b6e0" /></g> },
  { name: "QuickTime", on: true, art: <g><circle cx="13.500" cy="13.500" r="9.500" fill="#2a86dc" stroke="#42464c" strokeWidth="5" /><circle cx="13" cy="12" r="5" fill="#62b2f2" /><path d="m16 17 3-2 8 9-4 2z" fill="#42464c" /></g> },
];

const stacks: { name: string; art: React.ReactNode }[] = [
  { name: "Documents", art: <g><path d="M7 0h13v6H7z" fill="#eee" /><path d="M2 4h8l1 2h15v19H2z" fill="#6cc2e4" /><path d="M2 8h24v17H2z" fill="#87d2ee" /></g> },
  { name: "Photos window", art: <g><rect x="0" y="5" width="27" height="17" fill="#f3f3f3" /><path d="M1 17h3v3H1zM6 17h3v3H6zM10 17h2v3h-2zM13 17h3v3h-3z" fill="#333" /><path d="M2 8h5M14 8h10" stroke="#c7a" strokeWidth=".7" /><svg x="17" y="16" width="11" height="11" viewBox="0 0 28 28"><Photos /></svg></g> },
  { name: "Acrobat window", art: <g><rect x="0" y="6" width="27" height="17" fill="#f1ecec" /><path d="M2 9h12M2 12h10M2 15h13M17 9h6M17 12h7" stroke="#999" strokeWidth=".8" /><svg x="17" y="17" width="11" height="11" viewBox="0 0 28 28"><Acrobat /></svg></g> },
  { name: "Chrome window", art: <g><rect x="0" y="5" width="27" height="18" fill="#6d6a98" /><path d="M0 5h27v4H0z" fill="#f1f1f5" /><path d="M0 6.500h27" stroke="#6a3554" /><svg x="17" y="17" width="11" height="11" viewBox="0 0 28 28"><Chrome /></svg></g> },
  { name: "iTunes window", art: <g><rect x="0" y="6" width="27" height="16" fill="#f1f4f6" /><path d="M6 9h21" stroke="#111" strokeWidth="2" /><path d="M1 13h25M1 17h16" stroke="#79a8c8" /><svg x="17" y="16" width="11" height="11" viewBox="0 0 28 28"><ITunes /></svg></g> },
  { name: "Messages window", art: <g><rect x="0" y="3" width="27" height="21" fill="#eef1f3" /><path d="M12 8h13v9H12z" fill="#5d8b62" /><path d="M12 8h13v3H12z" fill="#8fc0e8" /><path d="M2 6h8M2 10h7M2 14h8M2 18h8M12 20h6" stroke="#8ab" /><circle cx="22.500" cy="22" r="4.500" fill="#3fa4ec" /></g> },
  { name: "Trash", art: <g><path d="m4 4 3 22h14l3-22z" fill="#c9cdcf" /><ellipse cx="14" cy="4" rx="10.500" ry="2.800" fill="#8b9092" stroke="#e6e8e9" /><path d="m8 3 3-2 3 2 3-2 4 3-3 2H9z" fill="#f4f4f4" /><path d="m8 8 2 16M14 8v16M20 8l-2 16M6 12l16 4M6 18l15 3" stroke="#eef0f1" strokeWidth=".8" /></g> },
];

function Dock() {
  return (
    <footer className="mx-[23px] mt-px flex h-[37px] shrink-0 rounded-t-[4px] bg-linear-to-r from-[#8c7464] via-[#4b7c6c] via-25% to-[#4e8a78] px-[3px] pt-[3px]">
      <ul className="flex flex-[875] justify-between">
        {apps.map((a) => (
          <li key={a.name} className="flex w-[28px] flex-col items-center">
            <button aria-label={a.name}>
              <svg className="block h-[28px] w-[28px] overflow-visible" viewBox="0 0 28 28">{a.art}</svg>
            </button>
            {a.on && <span className="mt-px h-[4px] w-[4px] rounded-full bg-black" />}
          </li>
        ))}
      </ul>
      <span className="mx-[7px] h-[28px] w-px bg-[#2f5c4e]" />
      <ul className="flex flex-[209] justify-between">
        {stacks.map((s) => (
          <li key={s.name}>
            <button aria-label={s.name}>
              <svg className="block h-[28px] w-[28px]" viewBox="0 0 28 28">{s.art}</svg>
            </button>
          </li>
        ))}
      </ul>
    </footer>
  );
}

export default function App() {
  return (
    <div className="h-screen bg-black px-16 font-['Liberation_Sans',Arial,sans-serif]">
      <div className="flex h-full flex-col overflow-hidden bg-linear-to-r from-[#6f5334] via-[#33594d] via-15% to-[#0d3f31]">
        <MenuBar />
        <div className="flex min-h-0 flex-1 rounded-b-[4px] bg-black pl-px">
          <div className="flex min-w-0 flex-1 flex-col overflow-hidden rounded-b-[4px]">
            <TitleBar />
            <div className="flex min-h-0 flex-1">
              <Sidebar />
              <NoteList />
              <Note />
            </div>
          </div>
        </div>
        <div className="ml-[45px] mr-[83px] h-[9px] shrink-0 rounded-b-[4px] bg-linear-to-b from-[#6f6f6f] to-[#919191]" />
        <Dock />
      </div>
    </div>
  );
}
